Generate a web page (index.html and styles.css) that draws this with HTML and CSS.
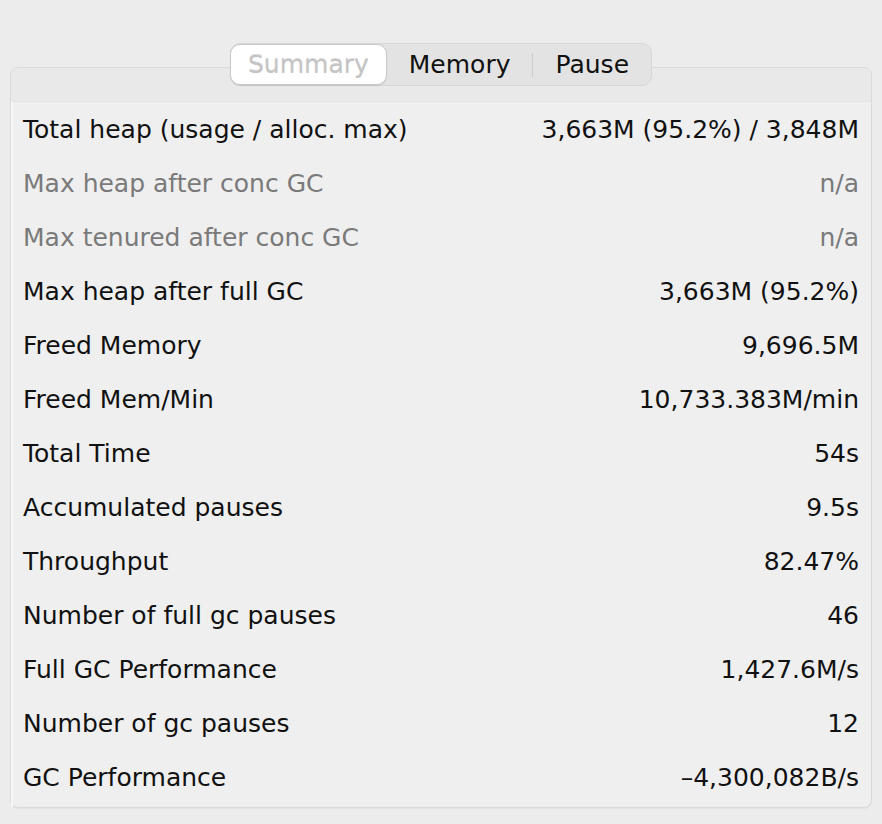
FILE: index.html
```html
<!DOCTYPE html>
<html>
<head>
<meta charset="utf-8">
<link rel="stylesheet" href="styles.css">
</head>
<body>
<div class="page">
  <div class="tabs-wrap">
    <div class="tabs">
      <div class="tab selected">Summary</div>
      <div class="tab">Memory</div>
      <div class="sep"></div>
      <div class="tab">Pause</div>
    </div>
  </div>
  <div class="panel">
    <div class="panel-head"></div>
    <div class="rows">
      <div class="row"><span>Total heap (usage / alloc. max)</span><span>3,663M (95.2%) / 3,848M</span></div>
      <div class="row dim"><span>Max heap after conc GC</span><span>n/a</span></div>
      <div class="row dim"><span>Max tenured after conc GC</span><span>n/a</span></div>
      <div class="row"><span>Max heap after full GC</span><span>3,663M (95.2%)</span></div>
      <div class="row"><span>Freed Memory</span><span>9,696.5M</span></div>
      <div class="row"><span>Freed Mem/Min</span><span>10,733.383M/min</span></div>
      <div class="row"><span>Total Time</span><span>54s</span></div>
      <div class="row"><span>Accumulated pauses</span><span>9.5s</span></div>
      <div class="row"><span>Throughput</span><span>82.47%</span></div>
      <div class="row"><span>Number of full gc pauses</span><span>46</span></div>
      <div class="row"><span>Full GC Performance</span><span>1,427.6M/s</span></div>
      <div class="row"><span>Number of gc pauses</span><span>12</span></div>
      <div class="row"><span>GC Performance</span><span>–4,300,082B/s</span></div>
    </div>
  </div>
</div>
</body>
</html>
```

FILE: styles.css
```css
html, body {
  margin: 0;
  padding: 0;
  background: #ececec;
}
body {
  font-family: "DejaVu Sans", "Noto Sans", sans-serif;
  color: #111;
  width: 882px;
  height: 824px;
  overflow: hidden;
}
.page {
  padding-top: 43px;
}
.tabs-wrap {
  display: flex;
  justify-content: center;
  position: relative;
  z-index: 2;
  margin-bottom: -19px;
}
.tabs {
  display: flex;
  align-items: center;
  height: 41px;
  background: #e3e3e3;
  border: 1px solid #d6d6d6;
  border-radius: 10px;
  font-size: 25px;
}
.tab {
  height: 41px;
  line-height: 41px;
  padding: 0 22px;
  color: #111;
}
.tab.selected {
  height: 39px;
  line-height: 39px;
  margin-left: -1px;
  background: #ffffff;
  border: 1px solid #c9c9c9;
  border-radius: 10px;
  color: #c4c4c4;
  text-shadow: 0 1px 0 #fff, 0 -1px 0 #d8d8d8;
  padding: 0 17px;
  box-shadow: 0 1px 1px rgba(0,0,0,0.08);
}
.sep {
  width: 1px;
  height: 24px;
  background: #cdcdcd;
}
.panel {
  margin: 0 10px;
  border: 1px solid #dadada;
  border-radius: 8px;
  background: #efefef;
  box-shadow: 0 1px 1px rgba(0,0,0,0.04);
  position: relative;
  z-index: 1;
}
.panel-head {
  height: 33px;
  background: #e9e9e9;
  border-radius: 8px 8px 0 0;
  border-bottom: 1px solid #e4e4e4;
}
.rows {
  padding: 0 12px 3px 10px;
  border-left: 2px solid #f7f7f7;
}
.row {
  display: flex;
  justify-content: space-between;
  align-items: center;
  height: 54px;
  font-size: 25px;
  color: #111;
}
.row.dim {
  color: #7a7a7a;
}
```
